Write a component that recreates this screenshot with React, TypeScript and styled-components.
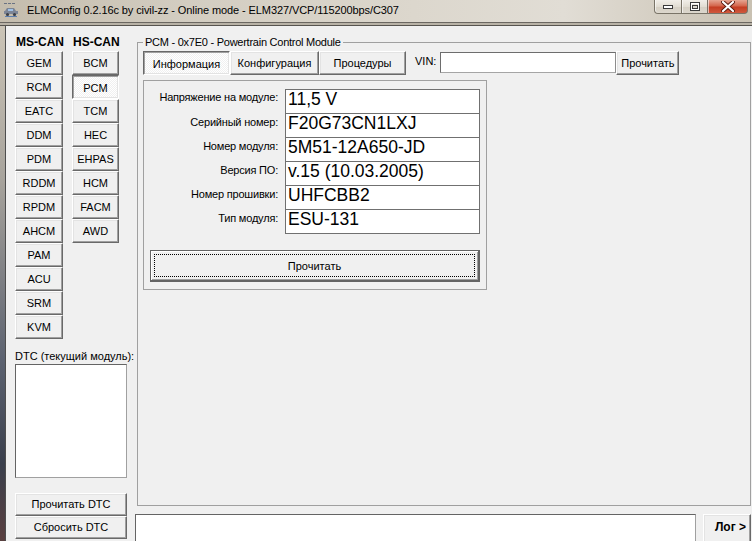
import React from 'react';
import styled, { createGlobalStyle, css } from 'styled-components';

const GlobalStyle = createGlobalStyle`
    html, body {
        margin: 0;
        padding: 0;
        background: #f0f0f0;
    }
    body {
        font-family: "Liberation Sans", Arial, sans-serif;
        font-size: 11px;
        color: #000;
    }
    * {
        box-sizing: border-box;
    }
`;

const raised = css`
    border: 1px solid;
    border-color: #fff #696969 #696969 #fff;
    box-shadow: inset -1px -1px 0 #a0a0a0, inset 1px 1px 0 #e3e3e3;
    background: #f0f0f0;
`;

const pressed = css`
    border: 1px solid;
    border-color: #696969 #fff #fff #696969;
    box-shadow: inset 1px 1px 0 #a0a0a0, inset -1px -1px 0 #e3e3e3;
    background: repeating-conic-gradient(#ffffff 0 25%, #f0f0f0 0 50%) 0 0 / 2px 2px;
`;

const sunken = css`
    border: 1px solid;
    border-color: #646464 #a0a0a0 #a0a0a0 #646464;
    background: #fff;
`;

const Window = styled.div`
    width: 752px;
    height: 541px;
    overflow: hidden;
    display: flex;
    flex-direction: column;
    background: #f0f0f0;
`;

const TitleBar = styled.div`
    height: 22px;
    flex-shrink: 0;
    display: flex;
    align-items: flex-start;
    background: linear-gradient(to right, #c4bcad 0%, #d3cdc1 25%, #dcd7cd 55%, #e1ddd5 75%, #c9c1b2 100%);
`;

const TitleIconBox = styled.div`
    width: 16px;
    height: 16px;
    margin: 2px 0 0 3px;
`;

const TitleText = styled.div`
    margin: 3px 0 0 8px;
    font-size: 11px;
    line-height: 14px;
    letter-spacing: -0.1px;
    white-space: nowrap;
    color: #000;
`;

const Controls = styled.div`
    margin-left: auto;
    margin-right: 4px;
    display: flex;
`;

const CtlButton = styled.div<{ $kind: 'min' | 'max' | 'close' }>`
    height: 14px;
    width: ${(p) => (p.$kind === 'close' ? 41 : p.$kind === 'min' ? 28 : 27)}px;
    display: flex;
    align-items: center;
    justify-content: center;
    border: 1px solid #7a7468;
    border-top: none;
    margin-left: -1px;
    border-radius: ${(p) => (p.$kind === 'min' ? '0 0 0 4px' : p.$kind === 'close' ? '0 0 4px 0' : '0')};
    background: ${(p) =>
        p.$kind === 'close'
            ? 'linear-gradient(#e5a592, #d4664d 45%, #c43d23 55%, #d0583d)'
            : 'linear-gradient(#f1eee8, #e2ddd3 50%, #d6d0c4 55%, #dcd7cd)'};
    box-shadow: inset 1px 0 0 rgba(255, 255, 255, 0.6);
`;

const FrameEdge = styled.div`
    height: 4px;
    flex-shrink: 0;
    background: #b8b2a6;
    border-top: 1px solid #6b6761;
    border-bottom: 1px solid #57544f;
`;

const Body = styled.div`
    flex: 1;
    min-height: 0;
    display: flex;
`;

const LeftFrame = styled.div`
    width: 6px;
    flex-shrink: 0;
    background: linear-gradient(#cbc4b6 0%, #a7a39c 30%, #5c6270 65%, #3a3f4c 85%, #5a4040 100%);
    border-right: 1px solid #4e4e4e;
`;

const Client = styled.div`
    flex: 1;
    min-width: 0;
    display: flex;
    background: #f0f0f0;
`;

const LeftPanel = styled.div`
    width: 125px;
    flex-shrink: 0;
    padding-left: 9px;
    display: flex;
    flex-direction: column;
`;

const BusHeader = styled.div`
    height: 25px;
    padding: 9px 0 0 1px;
    display: grid;
    grid-template-columns: 48px 47px;
    column-gap: 9px;
    font-size: 12px;
    font-weight: bold;
    line-height: 14px;
`;

const ModuleGrid = styled.div`
    display: grid;
    grid-template-columns: 48px 47px;
    column-gap: 9px;
    align-items: start;
`;

const ModuleColumn = styled.div`
    display: flex;
    flex-direction: column;
`;

const Button = styled.div<{ $down?: boolean }>`
    ${(p) => (p.$down ? pressed : raised)}
    display: flex;
    align-items: center;
    justify-content: center;
    font-size: 11px;
    line-height: 13px;
    white-space: nowrap;
`;

const ModuleButton = styled(Button)`
    height: 24px;
    padding-top: ${(p) => (p.$down ? 2 : 0)}px;
`;

const DtcLabel = styled.div`
    margin-top: 11px;
    line-height: 13px;
    white-space: nowrap;
`;

const DtcList = styled.div`
    ${sunken}
    width: 112px;
    height: 114px;
    margin-top: 1px;
`;

const DtcButtons = styled.div`
    margin-top: 15px;
    width: 112px;
    display: flex;
    flex-direction: column;
`;

const DtcButton = styled(Button)`
    height: 23px;
`;

const RightPanel = styled.div`
    flex: 1;
    min-width: 0;
    display: flex;
    flex-direction: column;
`;

const Group = styled.fieldset`
    flex: 1;
    min-height: 0;
    margin: 9px 1px 0 6px;
    padding: 2px 5px 0 5px;
    border: 1px solid #a0a0a0;
    min-width: 0;
`;

const Legend = styled.legend`
    padding: 0 2px;
    line-height: 14px;
    letter-spacing: -0.25px;
    white-space: nowrap;
`;

const TabRow = styled.div`
    display: flex;
    align-items: flex-start;
`;

const TabButton = styled(Button)<{ $w: number }>`
    width: ${(p) => p.$w}px;
    height: 24px;
    padding-top: ${(p) => (p.$down ? 2 : 0)}px;
`;

const VinLabel = styled.div`
    margin-left: 9px;
    padding-top: 4px;
    line-height: 13px;
`;

const VinInput = styled.div`
    border: 1px solid;
    border-color: #6d6d6d #8d8d8d #a5a5a5 #6d6d6d;
    background: #fff;
    width: 176px;
    height: 21px;
    margin: 1px 0 0 4px;
`;

const VinButton = styled(Button)`
    width: 63px;
    height: 24px;
    margin-top: 0;
`;

const InfoPanel = styled.div`
    width: 344px;
    height: 210px;
    margin-top: 5px;
    border: 1px solid #a0a0a0;
    padding: 8px 6px 0 6px;
`;

const InfoGrid = styled.div`
    display: grid;
    grid-template-columns: 128px 195px;
    column-gap: 7px;
`;

const InfoLabel = styled.div`
    text-align: right;
    padding-top: 2px;
    line-height: 13px;
    letter-spacing: -0.2px;
    white-space: nowrap;
`;

const InfoValue = styled.div<{ $first?: boolean }>`
    height: ${(p) => (p.$first ? 25 : 24)}px;
    border: 1px solid #707070;
    border-top-width: ${(p) => (p.$first ? 1 : 0)}px;
    background: #fff;
    padding-left: 2px;
    font-size: 17.5px;
    line-height: 18px;
    white-space: nowrap;
`;

const ReadButton = styled.div`
    position: relative;
    margin-top: 16px;
    width: 330px;
    height: 32px;
    border: 1px solid #646464;
    border-right-width: 2px;
    border-bottom-width: 2px;
    box-shadow: inset 1px 1px 0 #fff, inset -1px -1px 0 #a0a0a0;
    background: #f0f0f0;
    display: flex;
    align-items: center;
    justify-content: center;
    font-size: 11px;

    &::after {
        content: '';
        position: absolute;
        inset: 3px;
        border: 1px dotted #000;
    }
`;

const LogRow = styled.div`
    height: 27px;
    flex-shrink: 0;
    margin-top: 8px;
    display: flex;
`;

const LogBox = styled.div`
    border: 1px solid;
    border-color: #646464 #a0a0a0 #a0a0a0 #646464;
    background: #fff;
    width: 561px;
    height: 30px;
    margin-left: 4px;
`;

const LogButton = styled(Button)`
    width: 48px;
    height: 30px;
    margin-left: 7px;
    font-weight: bold;
    font-size: 12px;
    justify-content: flex-end;
    padding: 0 4px 4px 0;
`;

const TitleIcon = () => (
    <svg width="16" height="16" viewBox="0 0 16 16">
        <rect x="1" y="1" width="3" height="1" fill="#6a7283" />
        <rect x="5" y="1" width="3" height="1" fill="#6a7283" />
        <rect x="9" y="1" width="3" height="1" fill="#6a7283" />
        <path d="M2 9 L4 6 H11 L13 9 H15 V12 H1 V9 Z" fill="#7c8596" />
        <rect x="5" y="7" width="5" height="2" fill="#9fc1e6" />
        <circle cx="4.5" cy="12.5" r="1.6" fill="#3c4048" />
        <circle cx="11.5" cy="12.5" r="1.6" fill="#3c4048" />
        <rect x="2" y="14" width="12" height="1" fill="#5c7fb0" />
    </svg>
);

const MinGlyph = () => (
    <svg width="10" height="5" viewBox="0 0 10 5">
        <rect x="0.5" y="1.5" width="9" height="3" fill="#fff" stroke="#3a3a3a" />
    </svg>
);

const MaxGlyph = () => (
    <svg width="10" height="9" viewBox="0 0 10 9">
        <rect x="0.5" y="0.5" width="9" height="8" fill="none" stroke="#3a3a3a" />
        <rect x="1.5" y="1.5" width="7" height="6" fill="none" stroke="#fff" />
        <rect x="2.5" y="3.5" width="5" height="3" fill="#dcd7cd" stroke="#3a3a3a" />
    </svg>
);

const CloseGlyph = () => (
    <svg width="14" height="11" viewBox="0 0 14 11">
        <path d="M2 1 L12 10 M12 1 L2 10" stroke="#5a1a10" strokeWidth="4" strokeLinecap="round" />
        <path d="M2 1 L12 10 M12 1 L2 10" stroke="#fff" strokeWidth="2.2" strokeLinecap="round" />
    </svg>
);

const msCan = ['GEM', 'RCM', 'EATC', 'DDM', 'PDM', 'RDDM', 'RPDM', 'AHCM', 'PAM', 'ACU', 'SRM', 'KVM'];
const hsCan = ['BCM', 'PCM', 'TCM', 'HEC', 'EHPAS', 'HCM', 'FACM', 'AWD'];

const info: [string, string][] = [
    ['Напряжение на модуле:', '11,5 V'],
    ['Серийный номер:', 'F20G73CN1LXJ'],
    ['Номер модуля:', '5M51-12A650-JD'],
    ['Версия ПО:', 'v.15 (10.03.2005)'],
    ['Номер прошивки:', 'UHFCBB2'],
    ['Тип модуля:', 'ESU-131'],
];

const tabs = [
    { title: 'Информация', width: 87 },
    { title: 'Конфигурация', width: 89 },
    { title: 'Процедуры', width: 87 },
];

export default function App() {
    const selected = 'PCM';
    const activeTab = 'Информация';

    return (
        <Window>
            <GlobalStyle />
            <TitleBar>
                <TitleIconBox>
                    <TitleIcon />
                </TitleIconBox>
                <TitleText>ELMConfig 0.2.16c by civil-zz - Online mode - ELM327/VCP/115200bps/C307</TitleText>
                <Controls>
                    <CtlButton $kind="min">
                        <MinGlyph />
                    </CtlButton>
                    <CtlButton $kind="max">
                        <MaxGlyph />
                    </CtlButton>
                    <CtlButton $kind="close">
                        <CloseGlyph />
                    </CtlButton>
                </Controls>
            </TitleBar>
            <FrameEdge />
            <Body>
                <LeftFrame />
                <Client>
                    <LeftPanel>
                        <BusHeader>
                            <span>MS-CAN</span>
                            <span>HS-CAN</span>
                        </BusHeader>
                        <ModuleGrid>
                            <ModuleColumn>
                                {msCan.map((m) => (
                                    <ModuleButton key={m} $down={m === selected}>
                                        {m}
                                    </ModuleButton>
                                ))}
                            </ModuleColumn>
                            <ModuleColumn>
                                {hsCan.map((m) => (
                                    <ModuleButton key={m} $down={m === selected}>
                                        {m}
                                    </ModuleButton>
                                ))}
                            </ModuleColumn>
                        </ModuleGrid>
                        <DtcLabel>DTC (текущий модуль):</DtcLabel>
                        <DtcList />
                        <DtcButtons>
                            <DtcButton>Прочитать DTC</DtcButton>
                            <DtcButton>Сбросить DTC</DtcButton>
                        </DtcButtons>
                    </LeftPanel>
                    <RightPanel>
                        <Group>
                            <Legend>PCM - 0x7E0 - Powertrain Control Module</Legend>
                            <TabRow>
                                {tabs.map((t) => (
                                    <TabButton key={t.title} $w={t.width} $down={t.title === activeTab}>
                                        {t.title}
                                    </TabButton>
                                ))}
                                <VinLabel>VIN:</VinLabel>
                                <VinInput />
                                <VinButton>Прочитать</VinButton>
                            </TabRow>
                            <InfoPanel>
                                <InfoGrid>
                                    {info.map(([label, value], i) => (
                                        <React.Fragment key={label}>
                                            <InfoLabel>{label}</InfoLabel>
                                            <InfoValue $first={i === 0}>{value}</InfoValue>
                                        </React.Fragment>
                                    ))}
                                </InfoGrid>
                                <ReadButton>Прочитать</ReadButton>
                            </InfoPanel>
                        </Group>
                        <LogRow>
                            <LogBox />
                            <LogButton>Лог &gt;</LogButton>
                        </LogRow>
                    </RightPanel>
                </Client>
            </Body>
        </Window>
    );
}
